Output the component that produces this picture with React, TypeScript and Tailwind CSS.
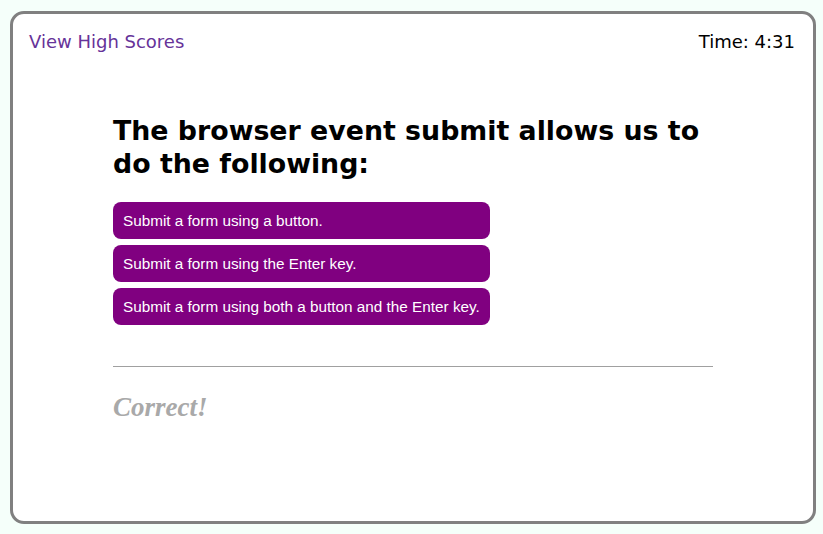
const choices = [
  "Submit a form using a button.",
  "Submit a form using the Enter key.",
  "Submit a form using both a button and the Enter key.",
];

export default function App() {
  return (
    <div className="min-h-[534px] w-full bg-[#f5fffa] pt-[11px] pl-[10px]">
      <div className="flex h-[513px] w-[806px] flex-col rounded-[14px] border-[3px] border-[#808080] bg-white">
        <header className="flex items-start justify-between pl-4 pr-[18px] pt-[17px] font-['DejaVu_Sans',sans-serif] text-[18px] leading-[21px]">
          <a href="#" className="text-[#663399]">
            View High Scores
          </a>
          <span className="text-black">Time: 4:31</span>
        </header>

        <main className="mx-auto mt-[62px] w-[600px]">
          <h2 className="font-['DejaVu_Sans',sans-serif] text-[26.8px] font-bold leading-[33px] text-black">
            The browser event submit allows us to do the following:
          </h2>

          <div className="mt-[22px] flex w-fit flex-col gap-[6px]">
            {choices.map((choice) => (
              <button
                key={choice}
                className="flex h-[37px] w-full items-center rounded-[8px] bg-[#800080] px-[10px] text-left font-['Liberation_Sans',Arial,sans-serif] text-[15.3px] leading-[17px] text-white"
              >
                {choice}
              </button>
            ))}
          </div>

          <div className="mt-[41px] border-t border-[#a0a0a0]" />

          <p className="mt-[25px] font-['Liberation_Serif','Times_New_Roman',serif] text-[27px] font-bold italic leading-[31px] text-[#a9a9a9]">
            Correct!
          </p>
        </main>
      </div>
    </div>
  );
}
